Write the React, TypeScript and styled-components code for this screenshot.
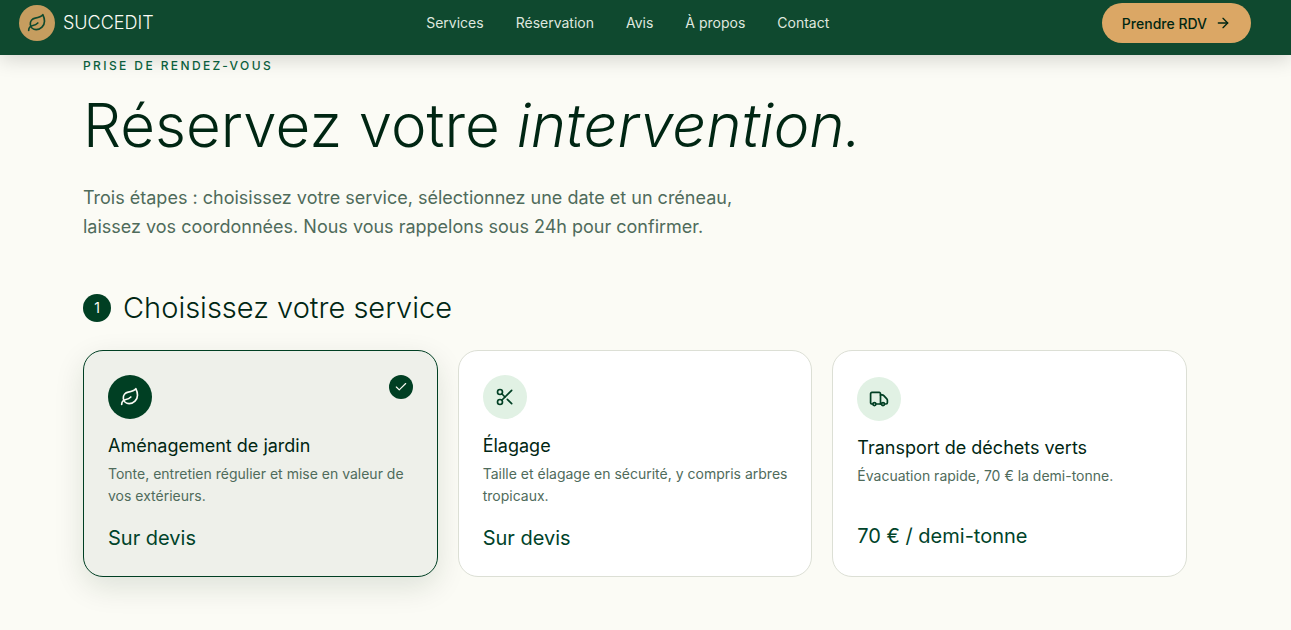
import React, { useState } from "react";
import styled, { createGlobalStyle } from "styled-components";
import { ArrowRight, Check, Leaf, Scissors } from "lucide-react";

const GlobalStyle = createGlobalStyle`
  *, *::before, *::after { box-sizing: border-box; }
  body {
    margin: 0;
    min-height: 100vh;
    background: #fbfbf5;
    color: #002613;
    font-family: Inter, "Liberation Sans", sans-serif;
  }
  h1, h2, p { margin: 0; }
  button { font: inherit; cursor: pointer; }
`;

const Header = styled.header`
  position: sticky;
  top: 0;
  z-index: 10;
  display: flex;
  align-items: center;
  justify-content: space-between;
  padding: 3px 40px 12px 19px;
  background: #0f492f;
  box-shadow: 0 4px 20px rgba(0, 0, 0, 0.16);
`;

const Brand = styled.a`
  display: flex;
  align-items: center;
  gap: 8px;
  color: #fbfbf5;
  font-size: 18px;
  font-weight: 300;
  line-height: 28px;
  text-decoration: none;
`;

const BrandMark = styled.span`
  display: grid;
  place-items: center;
  width: 36px;
  height: 36px;
  border-radius: 50%;
  background: #c69d5f;
  color: #0f492f;
`;

const Nav = styled.nav`
  display: flex;
  gap: 32px;
`;

const NavLink = styled.a`
  color: #dfe7df;
  font-size: 14px;
  line-height: 20px;
  text-decoration: none;
`;

const CallToAction = styled.button`
  display: flex;
  align-items: center;
  gap: 8px;
  height: 40px;
  padding: 0 20px;
  border: 0;
  border-radius: 20px;
  background: #dba765;
  color: #002613;
  font-size: 14px;
  font-weight: 500;
`;

const Page = styled.main`
  padding: 3px 104px 53px 83px;
`;

const Eyebrow = styled.p`
  color: #0b6440;
  font-size: 12px;
  font-weight: 500;
  line-height: 16px;
  letter-spacing: 0.2em;
  text-transform: uppercase;
`;

const Title = styled.h1`
  margin-top: 19px;
  font-size: 60px;
  font-weight: 300;
  line-height: 64px;
`;

const Lede = styled.p`
  max-width: 672px;
  margin-top: 26px;
  color: #4f6b5b;
  font-size: 18px;
  line-height: 29px;
`;

const StepTitle = styled.h2`
  display: flex;
  align-items: center;
  gap: 12px;
  margin-top: 47px;
  font-size: 29px;
  font-weight: 300;
  line-height: 40px;
`;

const StepNumber = styled.span`
  display: grid;
  place-items: center;
  width: 28px;
  height: 28px;
  border-radius: 50%;
  background: #003f23;
  color: #fbfbf5;
  font-size: 14px;
  font-weight: 400;
  line-height: 20px;
`;

const Cards = styled.div`
  display: grid;
  grid-template-columns: repeat(3, minmax(0, 1fr));
  gap: 20px;
  margin-top: 22px;
`;

const Card = styled.button<{ $selected: boolean }>`
  display: flex;
  flex-direction: column;
  justify-content: center;
  padding: 24px 20px 24px 24px;
  border: 1px solid ${(p) => (p.$selected ? "#003f23" : "#dcdfd5")};
  border-radius: 20px;
  background: ${(p) => (p.$selected ? "#eef0ea" : "#ffffff")};
  box-shadow: ${(p) => (p.$selected ? "0 10px 30px rgba(0, 38, 19, 0.12)" : "none")};
  color: #002613;
  text-align: left;
`;

const CardTop = styled.span`
  display: flex;
  align-items: flex-start;
  justify-content: space-between;
  padding-right: 4px;
`;

const CardIcon = styled.span<{ $selected: boolean }>`
  display: grid;
  place-items: center;
  width: 44px;
  height: 44px;
  border-radius: 50%;
  background: ${(p) => (p.$selected ? "#003f23" : "#e1f1e4")};
  color: ${(p) => (p.$selected ? "#fbfbf5" : "#003f23")};
`;

const Tick = styled.span`
  display: grid;
  place-items: center;
  width: 24px;
  height: 24px;
  border-radius: 50%;
  background: #003f23;
  color: #fbfbf5;
`;

const CardName = styled.span`
  margin-top: 15px;
  font-size: 18px;
  line-height: 24px;
`;

const CardText = styled.span`
  min-height: 40px;
  margin-top: 5px;
  color: #4f6b5b;
  font-size: 14px;
  line-height: 22px;
`;

const Price = styled.span`
  margin-top: 17px;
  color: #00432a;
  font-size: 20px;
  line-height: 28px;
`;

const TruckIcon = () => (
  <svg width="20" height="20" viewBox="0 0 20 20" fill="none" stroke="currentColor" strokeWidth="1.7" strokeLinecap="round" strokeLinejoin="round" aria-hidden="true">
    <path d="M3.8 15H2.9a1.3 1.3 0 0 1-1.3-1.3V4.7a1.3 1.3 0 0 1 1.3-1.3h7.3a1.3 1.3 0 0 1 1.3 1.3V15H7" />
    <path d="M11.5 5.9h1.6a2.4 2.4 0 0 1 1.7.7l3 3.2a2.2 2.2 0 0 1 .6 1.5v2.3a1.4 1.4 0 0 1-1.4 1.4h-1.3M12.5 15h-1" />
    <circle cx="5.4" cy="15.1" r="1.5" />
    <circle cx="14" cy="15.1" r="1.5" />
  </svg>
);

const links = [
  { label: "Services", href: "#services" },
  { label: "Réservation", href: "#reservation" },
  { label: "Avis", href: "#avis" },
  { label: "À propos", href: "#a-propos" },
  { label: "Contact", href: "#contact" },
];

const services = [
  {
    name: "Aménagement de jardin",
    text: "Tonte, entretien régulier et mise en valeur de vos extérieurs.",
    price: "Sur devis",
    icon: <Leaf size={20} />,
  },
  {
    name: "Élagage",
    text: "Taille et élagage en sécurité, y compris arbres tropicaux.",
    price: "Sur devis",
    icon: <Scissors size={20} />,
  },
  {
    name: "Transport de déchets verts",
    text: "Évacuation rapide, 70 € la demi-tonne.",
    price: "70 € / demi-tonne",
    icon: <TruckIcon />,
  },
];

export default function App() {
  const [selected, setSelected] = useState(0);

  return (
    <>
      <GlobalStyle />
      <Header>
        <Brand href="#accueil">
          <BrandMark>
            <Leaf size={20} />
          </BrandMark>
          SUCCEDIT
        </Brand>
        <Nav>
          {links.map((link) => (
            <NavLink key={link.href} href={link.href}>
              {link.label}
            </NavLink>
          ))}
        </Nav>
        <CallToAction type="button">
          Prendre RDV
          <ArrowRight size={16} />
        </CallToAction>
      </Header>
      <Page>
        <Eyebrow>Prise de rendez-vous</Eyebrow>
        <Title>
          Réservez votre <em>intervention.</em>
        </Title>
        <Lede>
          Trois étapes : choisissez votre service, sélectionnez une date et un créneau, laissez vos
          coordonnées. Nous vous rappelons sous 24h pour confirmer.
        </Lede>
        <StepTitle>
          <StepNumber>1</StepNumber>
          Choisissez votre service
        </StepTitle>
        <Cards>
          {services.map((service, i) => (
            <Card
              key={service.name}
              type="button"
              $selected={selected === i}
              aria-pressed={selected === i}
              onClick={() => setSelected(i)}
            >
              <CardTop>
                <CardIcon $selected={selected === i}>{service.icon}</CardIcon>
                {selected === i && (
                  <Tick>
                    <Check size={14} />
                  </Tick>
                )}
              </CardTop>
              <CardName>{service.name}</CardName>
              <CardText>{service.text}</CardText>
              <Price>{service.price}</Price>
            </Card>
          ))}
        </Cards>
      </Page>
    </>
  );
}
